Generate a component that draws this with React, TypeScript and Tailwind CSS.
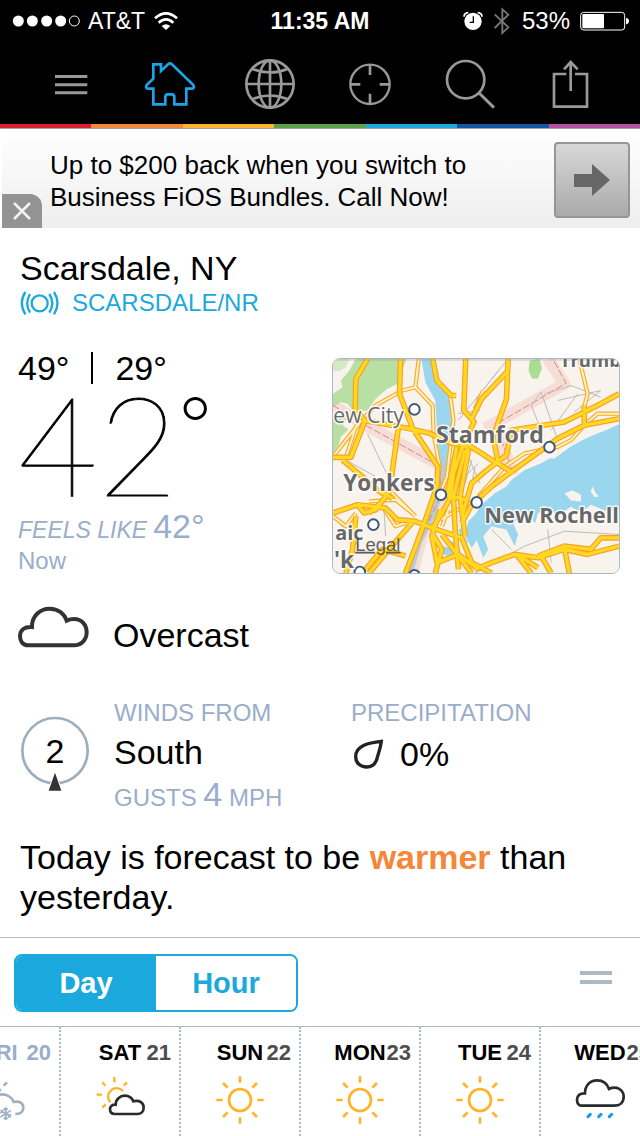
import type { ReactNode } from "react";

const stripes = ["bg-[#d9202e]", "bg-[#f5873a]", "bg-[#fbb331]", "bg-[#5a9f49]", "bg-[#1ba9dd]", "bg-[#1554a3]", "bg-[#b052a0]"];

function StatusBar() {
  return (
    <div className="grid h-[42px] grid-cols-[1fr_auto_1fr] items-center bg-black px-2.5 text-[24px] text-white">
      <div className="flex items-center gap-2 pl-0.5">
        <svg width="68" height="12" viewBox="36 43 204 36" fill="#fff" aria-label="Signal">
          <circle cx="55" cy="61" r="16.500" />
          <circle cx="97" cy="61" r="16.500" />
          <circle cx="140" cy="61" r="16.500" />
          <circle cx="182" cy="61" r="16.500" />
          <circle cx="223" cy="61" r="15" fill="none" stroke="#fff" strokeWidth="3" />
        </svg>
        <span className="text-[23px]">AT&amp;T</span>
        <svg width="26" height="20" viewBox="467 30 78 60" fill="none" stroke="#fff" strokeWidth="8" aria-label="Wi-Fi">
          <path d="M473 52Q506 22 539 52" />
          <path d="M484 65Q506 45 528 65" />
          <path d="M506 87L493 75Q506 64 519 75Z" fill="#fff" stroke="none" />
        </svg>
      </div>
      <span className="text-[23px] font-bold">11:35 AM</span>
      <div className="flex items-center justify-end gap-2">
        <svg width="22" height="20" viewBox="425 30 66 60" aria-label="Alarm">
          <circle cx="458" cy="61" r="26" fill="#fff" />
          <path d="M459 46V64H448" fill="none" stroke="#000" strokeWidth="4" />
          <path d="M431 47Q431 36 444 35M485 47Q485 36 472 35" fill="none" stroke="#fff" strokeWidth="5" />
        </svg>
        <svg width="20" height="28" viewBox="516 19 60 84" fill="none" stroke="#777" strokeWidth="5.500" aria-label="Bluetooth">
          <path d="M524 41L565 80L547 97V26L565 42L524 82" />
        </svg>
        <span className="mx-0.5">53%</span>
        <svg width="50" height="20" viewBox="780 31 150 60" aria-label="Battery">
          <rect x="782" y="35" width="132" height="53" rx="9" fill="none" stroke="#fff" strokeWidth="3" />
          <rect x="787" y="40" width="65" height="43" rx="3" fill="#fff" />
          <path d="M918 52Q927 53 927 61Q927 70 918 71Z" fill="#fff" />
        </svg>
      </div>
    </div>
  );
}

function NavButton({ label, viewBox, children }: { label: string; viewBox: string; children: ReactNode }) {
  return (
    <button aria-label={label} className="flex flex-1 justify-center">
      <svg width="56" height="56" viewBox={viewBox} fill="none" stroke="#999" strokeWidth="8">
        {children}
      </svg>
    </button>
  );
}

function NavBar() {
  return (
    <nav className="flex bg-black px-5 pt-[14px] pb-3">
      <NavButton label="Menu" viewBox="126 168 168 168">
        <path d="M165 229.500H262M165 254H262M165 278.500H262" strokeWidth="9" />
      </NavButton>
      <NavButton label="Home" viewBox="426 168 168 168">
        <path
          d="M460 193H483V213L505 192Q510 188 515 192L580 255Q585 266 574 266H559V313H523V291Q523 283 515 283H504Q496 283 496 291V313H460V266H446Q435 266 440 255L460 236Z"
          stroke="#1ca5e6"
        />
      </NavButton>
      <NavButton label="World" viewBox="726 168 168 168">
        <circle cx="810" cy="252" r="71" />
        <ellipse cx="810" cy="252" rx="34" ry="71" />
        <path d="M739 252H881M810 181V323M756 206Q810 229 864 206M756 298Q810 275 864 298" />
      </NavButton>
      <NavButton label="Locate" viewBox="66 168 168 168">
        <circle cx="150" cy="253" r="59" strokeWidth="7" />
        <path d="M150 194V225M150 281V312M91 253H121M179 253H209" />
      </NavButton>
      <NavButton label="Search" viewBox="366 168 168 168">
        <circle cx="437" cy="239" r="56" />
        <path d="M477 279L522 323" strokeWidth="9" />
      </NavButton>
      <NavButton label="Share" viewBox="666 168 168 168">
        <path d="M739 222H702V320H801V222H765M752 186V273M732 208L752 186L773 208" />
      </NavButton>
    </nav>
  );
}

function AdBanner() {
  return (
    <aside className="relative ml-0.5 flex items-center justify-between bg-gradient-to-b from-white to-[#eeeeee] pt-[13px] pr-[10px] pb-[10px] pl-12">
      <p className="mt-0.5 text-[26px] leading-8 text-black">
        Up to $200 back when you switch to
        <br />
        Business FiOS Bundles. Call Now!
      </p>
      <button
        aria-label="Open offer"
        className="flex size-[76px] shrink-0 items-center justify-center rounded border-2 border-[#969696] bg-gradient-to-b from-[#d8d8d8] to-[#aaaaaa]"
      >
        <svg width="36" height="32" viewBox="0 0 36 32" fill="#666">
          <path d="M0 10H18V0L36 16L18 32V23H0Z" />
        </svg>
      </button>
      <button aria-label="Close" className="absolute bottom-0 left-0 flex h-[34px] w-10 items-center justify-center rounded-tr-xl bg-[#939393]">
        <svg width="18" height="18" viewBox="0 0 18 18" stroke="#f4f4f4" strokeWidth="2.500">
          <path d="M1 1L17 17M17 1L1 17" />
        </svg>
      </button>
    </aside>
  );
}

const mainRoads = [
  "M126 24L90 85L88 178L118 210L75 322H21",
  "M110 210L180 222L250 235L310 248L380 280L430 285L470 310L515 340",
  "M225 24L222 130L262 235L338 350L335 410L290 540L240 672",
  "M322 24L335 90L378 135H393",
  "M218 235L198 380M205 405L165 460L130 490",
  "M50 330L115 385L160 425L200 445",
  "M21 490L95 465L180 475L215 510L270 515L320 535L410 565L440 640L500 672",
  "M95 465L115 490L150 480L180 440",
  "M422 24L416 180L447 215L412 290L385 370L375 445L350 490L318 540",
  "M550 24L545 145L505 260L520 340L565 370",
  "M545 65L470 145L440 205",
  "M412 280L430 300L405 440L420 560",
  "M395 290L365 440M420 300L385 440L390 540L400 660",
  "M885 130L830 160L720 215L560 240L545 315L480 365L440 400L410 500",
  "M885 205L780 225L700 265L560 365L500 410L440 465L410 520",
  "M360 435L425 450M345 480L320 560L335 640L400 615L460 660",
  "M780 165V225",
  "M320 550L350 600L330 672M350 555L400 620L440 672",
  "M450 660L500 640L570 615L640 625L720 600L790 615L885 590",
  "M885 565H830L800 600L720 590L640 620",
  "M575 615L620 672M585 620L640 655M650 620L680 672M718 585L735 672",
  "M60 672L80 600L90 500M130 672L190 600L260 520",
  "M120 660L170 600L240 620",
];

const minorRoads = [
  "M280 24L270 110L230 120L150 165L90 230L60 322",
  "M270 110L322 165L325 250L345 360",
  "M375 135L385 210L365 380L345 430",
  "M885 190H820L780 225L740 270L700 290L600 310L540 350L460 440",
  "M765 24L790 130L780 170",
  "M21 320L60 270L100 220",
  "M130 455L210 450L260 490M200 430L270 500M170 470L210 530L240 520",
  "M475 120L450 175M21 500L60 530L90 490",
  "M370 480L350 530M345 510L400 480L470 440",
];

const greyRoads =
  "M125 250L195 395M400 190L465 180M550 24L400 210M430 320L465 400M650 125L700 270M650 125L620 165L650 240M700 150L830 120L750 185M660 130L740 105L830 140M450 672L600 590L720 545L885 555M500 540L560 600M670 540L680 640M21 500L100 590M460 340L400 400M175 480L180 560M60 330L150 380M680 240L760 130M520 60L450 150M440 330L420 400M450 350L435 430";

const towns = [
  [267, 177], [347, 435], [455, 458], [675, 291], [143, 525], [102, 668], [267, 678],
];

function RadarMap() {
  return (
    <svg
      viewBox="21 24 864 648"
      className="mt-[10px] h-[216px] w-[288px] shrink-0 rounded-lg border border-[#a9b8c6]"
      preserveAspectRatio="xMidYMid slice"
      role="img"
      aria-label="Map around Scarsdale"
    >
      <rect x="21" y="24" width="864" height="648" fill="#f8f3ec" />
      <path d="M90 24H243L215 100L185 115L150 145L125 180L85 185L65 160L45 155L21 170V130L50 110L45 90L70 60Z" fill="#b7e0a2" />
      <path d="M21 24H70L60 50L40 62L21 60Z" fill="#d5e9c4" />
      <path d="M75 190L50 225L68 238L45 260L38 285L21 310V200Z" fill="#b7e0a2" />
      <path d="M615 30L645 24L652 55L640 84H622L612 60Z" fill="#a9dd92" />
      <path d="M288 24H322L335 90L372 130L380 205L374 330L352 440L325 510L290 580L262 672H230L268 585L312 480L345 360L335 235L330 150L300 95Z" fill="#9bd6ef" />
      <path
        d="M885 222L850 238L800 258L765 275L735 292L690 325L675 325L650 340L600 360L560 390L545 410L510 430L470 465L450 495L430 515L420 560L440 595L455 572L475 625L490 600L475 560L500 530L545 540L570 590L580 555L565 520L600 495L632 520L640 490L680 480L700 500L740 470L770 490L800 465L850 485L885 480Z"
        fill="#9bd6ef"
      />
      <path d="M720 430L745 422L770 435V455L740 452ZM805 410L815 430L825 440L810 442L800 425Z" fill="#f8f3ec" />
      <path d="M345 590L380 595L375 572L400 590L410 615L380 625L350 612ZM400 540L420 530L415 560L430 580L410 575Z" fill="#9bd6ef" />
      <g fill="none" strokeLinejoin="round">
        <path d="M21 165L120 225L345 345M480 235L720 100L670 24M515 230L565 375M260 672L290 560L345 440V345" stroke="#f3b5ab" strokeOpacity=".35" strokeWidth="36" />
        <path d="M21 165L120 225L345 350V440L290 560M520 218L725 98L685 24M520 240L565 370" stroke="#d08c84" strokeWidth="3" strokeDasharray="22 7" />
        <path d={greyRoads} stroke="#bdbbb6" strokeWidth="3" />
        <path d={minorRoads.join("")} stroke="#f8ab2b" strokeWidth="13" />
        <path d={minorRoads.join("")} stroke="#fff3bd" strokeWidth="6" />
        <path d={mainRoads.join("")} stroke="#f8a02c" strokeWidth="17" />
        <path d={mainRoads.join("")} stroke="#ffd91f" strokeWidth="10" />
      </g>
      {towns.map(([x, y]) => (
        <circle key={`${x}-${y}`} cx={x} cy={y} r="16" fill="#fff" stroke="#405878" strokeWidth="6" />
      ))}
      <g
        className="font-['Open_Sans','Noto_Sans',sans-serif] font-bold"
        fill="#686868"
        stroke="#fff"
        strokeOpacity=".85"
        strokeWidth="9"
        strokeLinejoin="round"
        paintOrder="stroke"
      >
        <text x="22" y="218" fontSize="64" className="font-medium">ew City</text>
        <text x="332" y="279" fontSize="70">Stamford</text>
        <text x="52" y="424" fontSize="68">Yonkers</text>
        <text x="478" y="519" fontSize="66">New Rochell</text>
        <text x="28" y="572" fontSize="60">aic</text>
        <text x="24" y="656" fontSize="68">'k</text>
        <text x="706" y="48" fontSize="56">Trumb</text>
      </g>
      <text x="88" y="604" fontSize="56" fill="#4d4d4d" fillOpacity=".9" textDecoration="underline" className="font-['Liberation_Sans',Arial,sans-serif]">
        Legal
      </text>
      <path d="M21 27H885" stroke="#7c7f80" strokeOpacity=".25" strokeWidth="6" />
    </svg>
  );
}

function Conditions() {
  return (
    <main className="pt-5 pb-5 text-black">
      <header className="px-5">
        <h1 className="text-[34px] leading-10">Scarsdale, NY</h1>
        <a href="#station" className="flex items-center gap-3 text-[24px] leading-[30px] text-[#1ba9dd]">
          <svg width="40" height="26" viewBox="62 511 120 78" fill="none" stroke="#1ba9dd" strokeWidth="7" aria-hidden="true">
            <circle cx="121" cy="551" r="24" />
            <path d="M92 523Q75 551 92 579M78 517Q57 550 78 584M150 523Q168 551 150 579M164 517Q185 550 164 584" />
          </svg>
          SCARSDALE/NR
        </a>
      </header>

      <section className="mt-[30px] flex justify-between pr-5 pl-[18px]">
        <div>
          <p className="flex items-center gap-[22px] text-[34px] leading-10">
            <span>49°</span>
            <span className="h-8 w-0.5 bg-black" />
            <span>29°</span>
          </p>
          <p className="flex pb-2 text-[138px] leading-[110px]">
            <span className="font-['Lato','Inter',sans-serif] font-thin [-webkit-text-stroke:1px_#000]">42</span>
            <span className="font-['Inter','Roboto',sans-serif] text-[76px] leading-[72px] font-extralight">°</span>
          </p>
          <p className="text-[34px] leading-10 text-[#9aadca]">
            <span className="text-[23px] leading-none italic">FEELS LIKE</span>
            <span className="pl-1.5">42°</span>
          </p>
          <p className="text-[24px] leading-[30px] text-[#9aadca]">Now</p>
        </div>
        <RadarMap />
      </section>

      <section className="mt-[29px] flex gap-6 px-[18px]">
        <svg width="71" height="50" viewBox="54 795 213 150" fill="none" stroke="#333" strokeWidth="12" aria-hidden="true">
          <path d="M85 916C67 916 60 902 60 888C60 870 74 859 96 861C95 828 120 806 149 806C175 806 193 822 200 842C208 838 214 837 222 837C245 837 260 855 260 877C260 899 244 916 222 916Z" />
        </svg>
        <p className="pt-[10px] text-[34px] leading-10">Overcast</p>
      </section>

      <section className="mt-[43px] grid grid-cols-[94px_237px_1fr] px-5 text-[24px] text-[#9aadca]">
        <div className="grid w-[70px] pt-[17px]">
          <svg width="70" height="77" viewBox="60 75 210 231" className="col-start-1 row-start-1" aria-hidden="true">
            <circle cx="165" cy="182" r="98" fill="none" stroke="#9dafbc" strokeWidth="8" />
            <path d="M165 248L146 302H184Z" fill="#333" stroke="#fff" strokeWidth="6" paintOrder="stroke" />
          </svg>
          <span className="col-start-1 row-start-1 pt-4 text-center text-[34px] leading-10 text-black">2</span>
        </div>
        <div>
          <h2 className="leading-[30px]">WINDS FROM</h2>
          <p className="mt-1 text-[34px] leading-10 text-black">South</p>
          <p className="mt-0.5 text-[34px] leading-10">
            <span className="text-[24px] leading-none">GUSTS </span>4<span className="text-[24px] leading-none"> MPH</span>
          </p>
        </div>
        <div>
          <h2 className="leading-[30px]">PRECIPITATION</h2>
          <p className="mt-1.5 flex items-center gap-[13px] text-[34px] leading-10 text-black">
            <svg width="36" height="32" viewBox="95 150 108 96" fill="none" stroke="#222" strokeWidth="10" aria-hidden="true">
              <path d="M186 160C150 164 109 172 109 206C109 226 124 237 142 237C160 237 170 226 174 208C179 190 184 178 186 160Z" />
            </svg>
            0%
          </p>
        </div>
      </section>

      <p className="mt-[23px] px-5 text-[34px] leading-10">
        Today is forecast to be <strong className="text-[#f5873a]">warmer</strong> than yesterday.
      </p>
    </main>
  );
}

function SunIcon() {
  return (
    <g stroke="#ffb32b" strokeWidth="8">
      <circle cx="90" cy="90" r="33" />
      <path d="M90 38V19M90 142V161M38 90H19M142 90H161M127 53L141 39M53 53L39 39M127 127L141 141M53 127L39 141" />
    </g>
  );
}

function PartlyCloudyIcon() {
  return (
    <>
      <path
        d="M99 63A25 25 0 1 0 61 97M73 21V37M37 37L46 47M111 37L101 47M20 74H36M37 113L47 103"
        stroke="#ffb32b"
        strokeWidth="7"
      />
      <path d="M74 132C63 132 60 124 60 118C60 109 67 103 77 104C77 88 90 77 104 77C117 77 126 84 130 94C149 89 161 99 161 113C161 125 153 132 142 132Z" stroke="#2b2b2b" strokeWidth="8" />
    </>
  );
}

function RainIcon() {
  return (
    <>
      <path d="M37 107C25 107 21 98 21 89C21 77 30 69 45 70C45 47 60 31 81 31C100 31 112 41 117 57C140 46 161 60 161 80C161 98 149 107 132 107Z" stroke="#2b2b2b" strokeWidth="8" />
      <path d="M54 140L61 133M86 140L93 133M118 140L125 133" stroke="#129fe0" strokeWidth="9" strokeLinecap="round" />
    </>
  );
}

function SnowIcon() {
  return (
    <g stroke="#9fb1bf" strokeWidth="8">
      <path d="M111 37L101 47M60 75A24 24 0 0 1 93 62M90 74C108 71 124 79 131 96C148 91 160 101 160 113C160 125 150 132 136 132" />
      <path d="M107 112V150M91 121L123 141M123 121L91 141M101 115L107 121L113 115M101 147L107 141L113 147M91 129L99 126L97 119M123 133L115 136L117 143" strokeWidth="5" />
    </g>
  );
}

const days = [
  { name: "FRI", date: 20, icon: <SnowIcon />, past: true },
  { name: "SAT", date: 21, icon: <PartlyCloudyIcon /> },
  { name: "SUN", date: 22, icon: <SunIcon /> },
  { name: "MON", date: 23, icon: <SunIcon /> },
  { name: "TUE", date: 24, icon: <SunIcon /> },
  { name: "WED", date: 25, icon: <RainIcon /> },
];

function Forecast() {
  return (
    <section>
      <div className="flex items-center justify-between border-t border-[#bbbbbb] pt-4 pr-7 pb-[14px] pl-[14px]">
        <div className="grid h-[58px] w-[284px] grid-cols-2 overflow-hidden rounded-lg border-2 border-[#1ba9dd] text-[29px] leading-[54px] font-bold">
          <button aria-pressed="true" className="bg-[#1ba9dd] text-white">Day</button>
          <button aria-pressed="false" className="bg-white text-[#1ba9dd]">Hour</button>
        </div>
        <button aria-label="Resize forecast" className="flex w-8 flex-col gap-[5px] pb-3">
          <span className="h-1 w-full bg-[#acbac7]" />
          <span className="h-1 w-full bg-[#acbac7]" />
        </button>
      </div>
      <div className="overflow-hidden border-t border-[#acbac7]">
        <ul className="-ml-[59px] flex">
          {days.map((day) => (
            <li key={day.name} className="w-[120px] shrink-0 border-r-2 border-dotted border-[#acbac7] pb-1.5">
              <p
                className={
                  day.past
                    ? "grid grid-cols-[1fr_auto_1fr] pt-[9px] text-[22px] leading-[34px] font-bold text-[#9aadca]"
                    : "grid grid-cols-[1fr_auto_1fr] pt-[9px] text-[22px] leading-[34px] font-bold text-black"
                }
              >
                <span className="col-start-2">{day.name}</span>
                <span className={day.past ? "pr-2 text-right" : "pr-2 text-right text-[#4d4d4d]"}>{day.date}</span>
              </p>
              <svg width="60" height="60" viewBox="0 0 180 180" fill="none" className="mx-auto block" aria-hidden="true">
                {day.icon}
              </svg>
            </li>
          ))}
        </ul>
      </div>
    </section>
  );
}

export default function App() {
  return (
    <div className="min-h-screen overflow-x-hidden bg-white font-['Liberation_Sans',Arial,sans-serif]">
      <StatusBar />
      <NavBar />
      <div className="flex h-[5px] border-b border-[#a0a0a0]">
        {stripes.map((color) => (
          <span key={color} className={`flex-1 ${color}`} />
        ))}
      </div>
      <AdBanner />
      <Conditions />
      <Forecast />
    </div>
  );
}
